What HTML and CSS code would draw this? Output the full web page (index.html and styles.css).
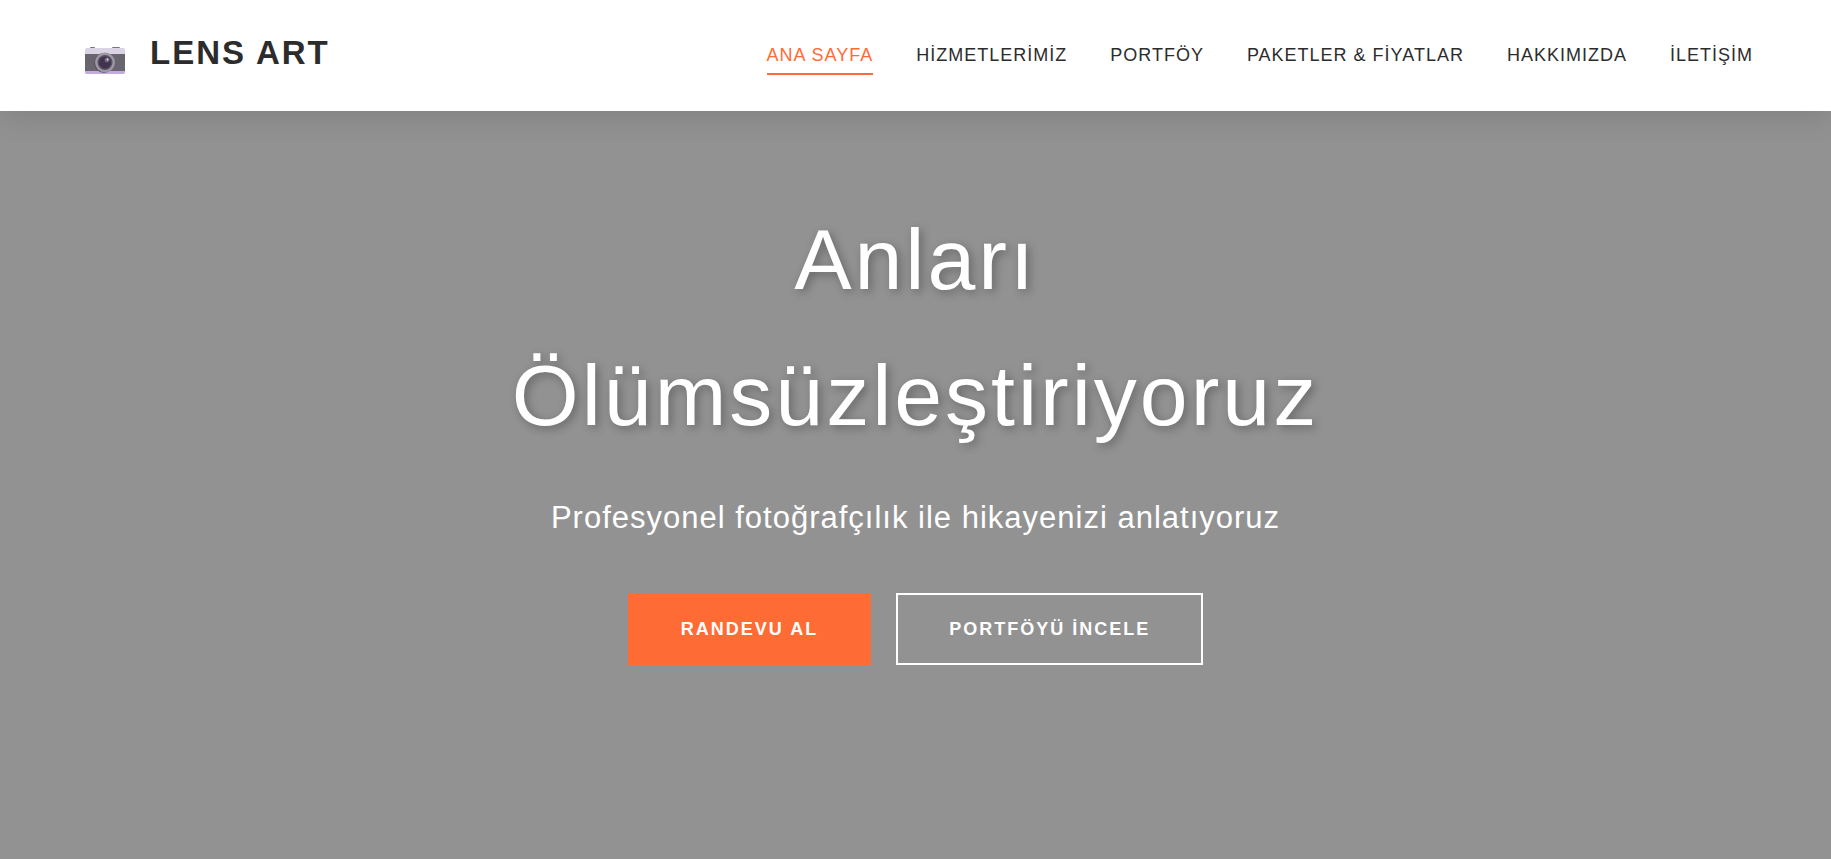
FILE: index.html
```html
<!DOCTYPE html>
<html lang="tr">
<head>
    <meta charset="UTF-8">
    <meta name="viewport" content="width=device-width, initial-scale=1.0">
    <title>LENS ART</title>
    <link rel="stylesheet" href="styles.css">
</head>
<body>
    <!-- Header -->
    <header class="header">
        <a href="#" class="logo">
            <svg class="logo-icon" viewBox="0 0 40 28" aria-hidden="true">
                <rect x="5" y="0" width="5" height="3" rx="1" fill="#77727c"/>
                <rect x="27" y="0" width="8" height="3" rx="1" fill="#77727c"/>
                <rect x="0" y="1" width="40" height="26" rx="2" fill="#d9d3e3"/>
                <path d="M0 23H40V25Q40 27 38 27H2Q0 27 0 25Z" fill="#c3abdb"/>
                <rect x="0" y="7" width="40" height="17" fill="#69656f"/>
                <circle cx="19" cy="16" r="10" fill="#59545f"/>
                <circle cx="20" cy="15.5" r="10" fill="#9b97a3"/>
                <circle cx="20" cy="15.5" r="7.5" fill="#5a5064"/>
                <circle cx="20" cy="15.5" r="6" fill="#41334e"/>
                <circle cx="22" cy="13" r="2.5" fill="#6f657b"/>
                <circle cx="22.5" cy="12.5" r="1" fill="#e4deea"/>
            </svg>
            <span>LENS ART</span>
        </a>
        <nav class="nav">
            <a href="#" class="active">ANA SAYFA</a>
            <a href="#hizmetler">HİZMETLERİMİZ</a>
            <a href="#portfoy">PORTFÖY</a>
            <a href="#paketler">PAKETLER &amp; FİYATLAR</a>
            <a href="#hakkimizda">HAKKIMIZDA</a>
            <a href="#iletisim">İLETİŞİM</a>
        </nav>
    </header>

    <!-- Hero -->
    <main class="hero">
        <h1>Anları Ölümsüzleştiriyoruz</h1>
        <p>Profesyonel fotoğrafçılık ile hikayenizi anlatıyoruz</p>
        <div class="hero-buttons">
            <a href="#iletisim" class="btn btn-primary">RANDEVU AL</a>
            <a href="#portfoy" class="btn">PORTFÖYÜ İNCELE</a>
        </div>
    </main>
</body>
</html>
```
FILE: styles.css
```css
* {
    margin: 0;
    padding: 0;
    box-sizing: border-box;
}

body {
    min-height: 100vh;
    display: flex;
    flex-direction: column;
    font-family: "Liberation Sans", Arial, sans-serif;
    background: #929292;
    color: #2c2c2c;
}

a {
    color: inherit;
    text-decoration: none;
}

/* Header */
.header {
    display: flex;
    justify-content: space-between;
    align-items: center;
    padding: 26px 78px 27px 85px;
    background: #fff;
    box-shadow: 0 5px 30px rgba(0, 0, 0, 0.13);
}

.logo {
    display: flex;
    align-items: flex-end;
    gap: 25px;
    padding-bottom: 4px;
    font-size: 33px;
    font-weight: bold;
    line-height: 54px;
    letter-spacing: 2px;
}

.logo-icon {
    width: 40px;
    height: 28px;
    margin-bottom: 5px;
}

.nav {
    display: flex;
    gap: 43px;
}

.nav a {
    padding: 8px 0 5px;
    border-bottom: 2px solid transparent;
    font-size: 18px;
    line-height: 25px;
    letter-spacing: 1px;
}

.nav .active {
    color: #ff6b35;
    border-color: #ff6b35;
}

/* Hero */
.hero {
    flex: 1;
    display: flex;
    flex-direction: column;
    align-items: center;
    padding: 80px 24px;
    color: #fff;
    text-align: center;
}

.hero h1 {
    max-width: 850px;
    margin-bottom: 30px;
    font-size: 86px;
    font-weight: normal;
    line-height: 136px;
    letter-spacing: 3px;
    text-shadow: 3px 3px 10px rgba(0, 0, 0, 0.3);
}

.hero p {
    margin-bottom: 50px;
    font-size: 31px;
    line-height: 50px;
    letter-spacing: 1px;
}

.hero-buttons {
    display: flex;
    gap: 25px;
}

.btn {
    padding: 20px 51px;
    border: 2px solid #fff;
    font-size: 18px;
    font-weight: bold;
    line-height: 28px;
    letter-spacing: 2px;
}

.btn-primary {
    background: #ff6b35;
    border-color: #ff6b35;
}
```
